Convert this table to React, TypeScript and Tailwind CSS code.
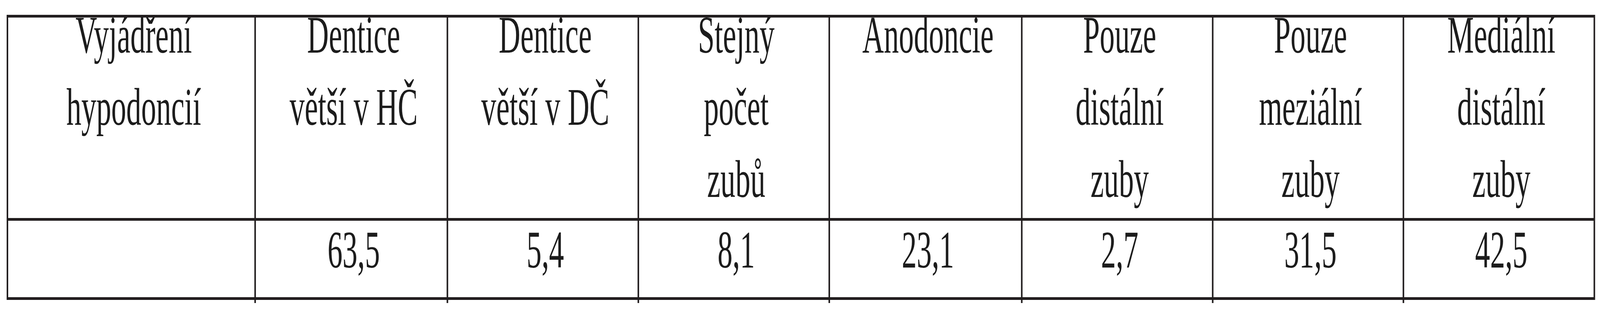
import React, { useEffect, useState } from "react";

const widths = [
  "w-[1117px]",
  "w-[867px]",
  "w-[861px]",
  "w-[861px]",
  "w-[868px]",
  "w-[861px]",
  "w-[860px]",
  "w-[861px]",
];

const headers: string[][] = [
  ["Vyjádření", "hypodoncií"],
  ["Dentice", "větší v HČ"],
  ["Dentice", "větší v DČ"],
  ["Stejný", "počet", "zubů"],
  ["Anodoncie"],
  ["Pouze", "distální", "zuby"],
  ["Pouze", "meziální", "zuby"],
  ["Mediální", "distální", "zuby"],
];

const values = ["", "63,5", "5,4", "8,1", "23,1", "2,7", "31,5", "42,5"];

const DESIGN_WIDTH = 7215;

function fitScale() {
  if (typeof window === "undefined") return 1;
  return Math.min(1, window.innerWidth / DESIGN_WIDTH);
}

export default function App() {
  const [scale, setScale] = useState<number>(fitScale);
  useEffect(() => {
    const onResize = () => setScale(fitScale());
    window.addEventListener("resize", onResize);
    return () => window.removeEventListener("resize", onResize);
  }, []);

  return (
    <div className="h-[800px] w-full overflow-hidden bg-white">
      <div
        className="h-[800px] w-[7215px] origin-top-left bg-white pl-[30px] pt-[38px] font-['Liberation_Serif',serif] text-[#1c1c1c]"
        style={{ transform: `scaleX(${scale})` }}
      >
        <div className="w-fit border-y-[7px] border-l-[7px] border-[#221e1f]">
          <div className="flex border-b-[7px] border-[#221e1f]">
            {headers.map((lines, i) => (
              <div
                key={i}
                className={`${widths[i]} h-[514px] shrink-0 overflow-hidden border-r-[7px] border-[#221e1f]`}
              >
                <div className="mt-[-48px] pl-[22px] text-center text-[135px] leading-[185px]">
                  {lines.map((l, j) => (
                    <div key={j}>{l}</div>
                  ))}
                </div>
              </div>
            ))}
          </div>
          <div className="flex">
            {values.map((v, i) => (
              <div
                key={i}
                className={`${widths[i]} h-[196px] shrink-0 overflow-hidden border-r-[7px] border-[#221e1f]`}
              >
                <div className="pl-[22px] text-center text-[135px] leading-[150px]">{v}</div>
              </div>
            ))}
          </div>
        </div>
        <div className="flex h-[8px] pl-[7px]">
          {widths.map((w, i) => (
            <div
              key={i}
              className={`${w} shrink-0 ${i < widths.length - 1 ? "border-r-[7px] border-[#221e1f]" : ""}`}
            />
          ))}
        </div>
      </div>
    </div>
  );
}
